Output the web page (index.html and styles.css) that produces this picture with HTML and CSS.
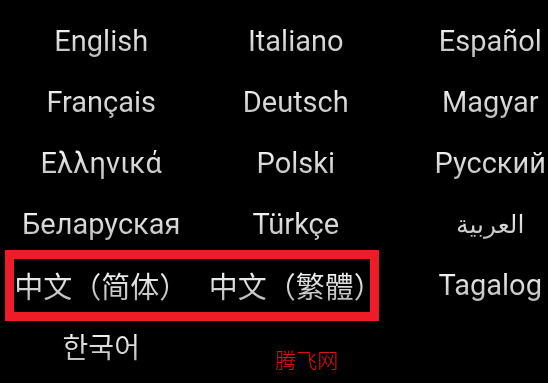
FILE: index.html
```html
<!DOCTYPE html>
<html lang="en">
<head>
<meta charset="utf-8">
<title>Languages</title>
<link rel="stylesheet" href="styles.css">
</head>
<body>
<div class="screen">
  <ul class="langs">
    <li>English</li>
    <li>Italiano</li>
    <li>Español</li>
    <li>Français</li>
    <li>Deutsch</li>
    <li>Magyar</li>
    <li>Ελληνικά</li>
    <li>Polski</li>
    <li>Русский</li>
    <li>Беларуская</li>
    <li>Türkçe</li>
    <li class="ar">العربية</li>
    <li class="zh">中文（简体）</li>
    <li class="zh">中文（繁體）</li>
    <li>Tagalog</li>
    <li class="ko">한국어</li>
  </ul>
  <div class="highlight"></div>
  <div class="watermark">腾飞网</div>
</div>
</body>
</html>
```
FILE: styles.css
```css
html, body {
  margin: 0;
  padding: 0;
  background: #000;
}
.screen {
  position: relative;
  width: 548px;
  height: 383px;
  overflow: hidden;
  background: #000;
}
.langs {
  list-style: none;
  margin: 0;
  padding: 11px 0 0 4px;
  display: grid;
  grid-template-columns: repeat(3, 194.5px);
  grid-auto-rows: 61px;
  font-family: Roboto, "Noto Sans CJK SC", "DejaVu Sans", sans-serif;
  font-size: 29px;
  line-height: 61px;
  color: #dcdcdc;
}
.langs li {
  text-align: center;
  white-space: nowrap;
  background: linear-gradient(to bottom, #f2f2f2 30%, #b4b4b4 80%);
  -webkit-background-clip: text;
  background-clip: text;
  -webkit-text-fill-color: transparent;
}
.langs .zh {
  font-family: "Noto Sans CJK SC", sans-serif;
  font-size: 29px;
}
.langs .ko {
  font-family: "Noto Sans CJK KR", sans-serif;
  font-size: 28px;
}
.langs .ar {
  font-family: "DejaVu Sans", sans-serif;
  font-size: 25px;
}
.highlight {
  position: absolute;
  left: 5px;
  top: 250px;
  width: 356px;
  height: 53px;
  border: 9px solid #ee1c27;
}
.watermark {
  position: absolute;
  left: 275px;
  top: 345px;
  font-family: "Noto Sans CJK SC", sans-serif;
  font-weight: 200;
  font-size: 21px;
  line-height: 28px;
  color: #d8121c;
}
```
